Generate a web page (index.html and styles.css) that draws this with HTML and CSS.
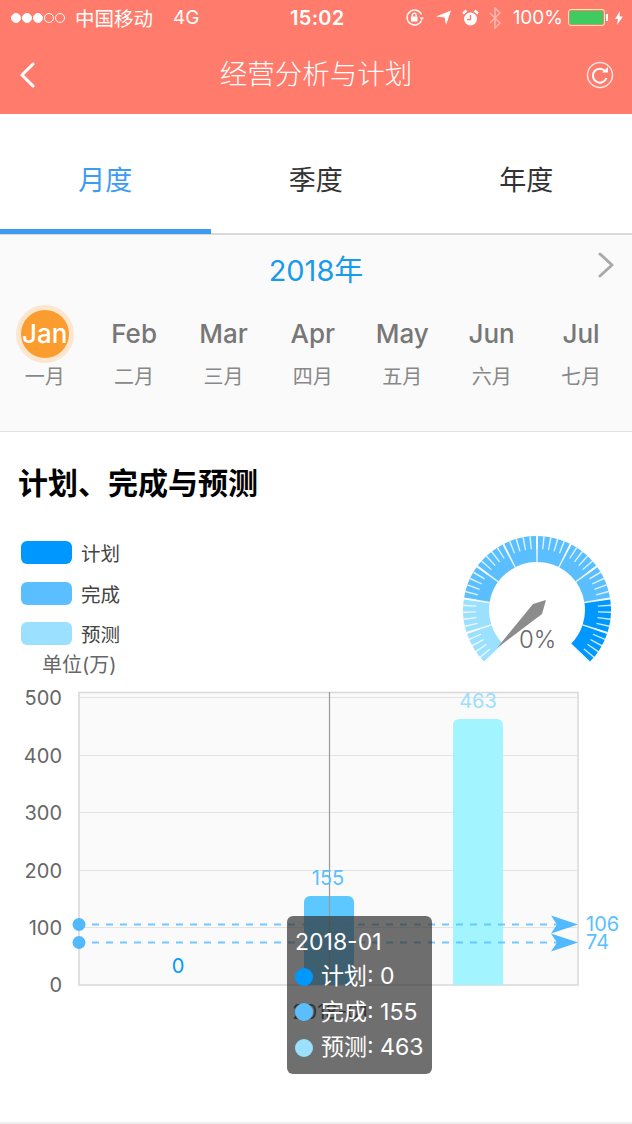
FILE: index.html
```html
<!DOCTYPE html>
<html lang="zh-CN">
<head>
	<meta charset="UTF-8">
	<meta name="viewport" content="width=device-width, initial-scale=1.0">
	<title>经营分析与计划</title>
	<link rel="stylesheet" href="styles.css">
</head>
<body>

	<header class="top">
		<div class="status">
			<div class="status-left">
				<span class="signal"><i></i><i></i><i></i><i class="off"></i><i class="off"></i></span>
				<span class="carrier">中国移动</span>
				<span class="net">4G</span>
			</div>
			<div class="clock">15:02</div>
			<div class="status-right">
				<svg class="ico-lock" width="18" height="18" viewBox="0 0 18 18" fill="none" stroke="#fff" stroke-width="1.400"><path d="M15.500 11.500A7.500 7.500 0 1 1 15.500 5.500"/><path d="M13.500 8.500h4.500l-2.200 2.800z" fill="#fff" stroke="none"/><rect x="5" y="7.500" width="6.500" height="5" fill="#fff" stroke="none"/><path d="M6.400 7.500V6a1.800 1.800 0 0 1 3.700 0v1.500"/></svg>
				<svg class="ico-arrow" width="15" height="15" viewBox="0 0 15 15"><path d="M15 0.500L10 15 8.600 7.400 0 6.500z" fill="#fff"/></svg>
				<svg width="17" height="18" viewBox="0 0 17 18"><circle cx="8.500" cy="10" r="6.500" fill="#fff"/><path d="M8.500 6v4.500H5" fill="none" stroke="#ff7b6b" stroke-width="1.300"/><path d="M1 4.500L4.500 1.500M16 4.500L12.500 1.500" stroke="#fff" stroke-width="2.400"/></svg>
				<svg class="bt" width="12" height="22" viewBox="0 0 12 22" fill="none" stroke="#fff" stroke-opacity=".45" stroke-width="1.500"><path d="M1 6l10 10-5 5V1l5 5L1 16"/></svg>
				<span class="battery-pct">100%</span>
				<span class="battery"><span class="battery-fill"></span></span>
				<svg width="8" height="14" viewBox="0 0 8 14"><path d="M5 0L0 8h3l-1 6 6-8.500H4.500z" fill="#fff"/></svg>
			</div>
		</div>
		<div class="navbar">
			<svg class="nav-icon" width="18" height="26" viewBox="0 0 18 26" fill="none" stroke="#fff" stroke-width="3" stroke-linecap="round" stroke-linejoin="round"><path d="M15 2L4 13l11 11"/></svg>
			<h1>经营分析与计划</h1>
			<svg class="nav-icon" width="28" height="28" viewBox="0 0 28 28" fill="none" stroke="#fff" stroke-width="1.500"><circle cx="14" cy="14" r="12.500" stroke-opacity=".8"/><path d="M19.500 10.500A7 7 0 1 0 20.500 17" stroke-width="2"/><path d="M16 11.500h6V6z" fill="#fff" stroke="none"/></svg>
		</div>
	</header>

	<nav class="tabs">
		<a class="tab active">月度</a>
		<a class="tab">季度</a>
		<a class="tab">年度</a>
	</nav>

	<section class="months">
		<div class="year-row">
			<span class="year">2018年</span>
			<svg class="year-next" width="18" height="28" viewBox="0 0 18 28" fill="none" stroke="#aaa" stroke-width="3" stroke-linecap="round" stroke-linejoin="round"><path d="M3 3l12 11L3 25"/></svg>
		</div>
		<ul class="month-list">
			<li class="current"><b>Jan</b><span>一月</span></li>
			<li><b>Feb</b><span>二月</span></li>
			<li><b>Mar</b><span>三月</span></li>
			<li><b>Apr</b><span>四月</span></li>
			<li><b>May</b><span>五月</span></li>
			<li><b>Jun</b><span>六月</span></li>
			<li><b>Jul</b><span>七月</span></li>
		</ul>
	</section>

	<section class="report">
		<h2>计划、完成与预测</h2>

		<div class="overview">
			<div>
				<ul class="legend">
					<li><i class="plan"></i>计划</li>
					<li><i class="done"></i>完成</li>
					<li><i class="forecast"></i>预测</li>
				</ul>
				<p class="unit">单位(万)</p>
			</div>

			<svg class="gauge" width="150" height="130" viewBox="462 536 150 130">
				<g fill="none" stroke-width="26">
					<circle cx="537" cy="611" r="61" pathLength="360" stroke="#9be0ff" stroke-dasharray="54 306" transform="rotate(135 537 611)"/>
					<circle cx="537" cy="611" r="61" pathLength="360" stroke="#5bbfff" stroke-dasharray="162 198" transform="rotate(189 537 611)"/>
					<circle cx="537" cy="611" r="61" pathLength="360" stroke="#0098ff" stroke-dasharray="54 306" transform="rotate(351 537 611)"/>
					<circle cx="537" cy="611" r="67.500" pathLength="360" stroke="#fff" stroke-opacity=".8" stroke-width="13" stroke-dasharray="1.200 4.200" stroke-dashoffset=".6" transform="rotate(135 537 611)"/>
					<circle cx="537" cy="611" r="61" pathLength="360" stroke="#fff" stroke-opacity=".85" stroke-dasharray="1.600 25.400" stroke-dashoffset=".8" transform="rotate(135 537 611)"/>
				</g>
				<path d="M546 601L533 605 497 649 542 615z" fill="#8c8c8c"/>
				<text x="519" y="649" class="gauge-value">0%</text>
			</svg>
		</div>

		<div class="chart">
			<svg width="632" height="420" viewBox="0 680 632 420">
				<rect x="79" y="692.500" width="499" height="292.500" fill="#fafafa" stroke="#d8d8d8" stroke-width="1.500"/>
				<path d="M79 697.500H578M79 755.500H578M79 812.500H578M79 870.500H578M79 927.500H578" stroke="#e3e3e3" stroke-width="1"/>
				<g class="axis-y">
					<text x="62" y="705">500</text>
					<text x="62" y="763">400</text>
					<text x="62" y="820">300</text>
					<text x="62" y="878">200</text>
					<text x="62" y="935">100</text>
					<text x="62" y="992">0</text>
				</g>
				<path d="M304 985V902a6 6 0 0 1 6-6h38a6 6 0 0 1 6 6v83z" fill="#5cc8ff"/>
				<path d="M453 985V725a6 6 0 0 1 6-6h38a6 6 0 0 1 6 6v260z" fill="#a2f4ff"/>
				<path d="M329.500 692V985" stroke="#999" stroke-width="1.200"/>
				<path d="M92 924.500H560M92 942.500H560" stroke="#5bbfff" stroke-opacity=".85" stroke-width="2" stroke-dasharray="7 7"/>
				<g fill="#52b9ff">
					<circle cx="79" cy="924.500" r="6.500"/>
					<circle cx="79" cy="942.500" r="6.500"/>
					<path d="M551 915.500L578 924.500 551 933.500 557 924.500z"/>
					<path d="M551 933.500L578 942.500 551 951.500 557 942.500z"/>
				</g>
				<text x="178" y="973" class="val plan-val">0</text>
				<text x="328" y="885" class="val done-val">155</text>
				<text x="478" y="708" class="val forecast-val">463</text>
				<text x="586" y="931" class="val-side">106</text>
				<text x="586" y="949" class="val-side">74</text>
				<text x="330" y="1019" class="axis-x">2018-01</text>
			</svg>

			<div class="tip">
				<div class="tip-title">2018-01</div>
				<div class="tip-row"><i class="plan"></i>计划: 0</div>
				<div class="tip-row"><i class="done"></i>完成: 155</div>
				<div class="tip-row"><i class="forecast"></i>预测: 463</div>
			</div>
		</div>
	</section>

</body>
</html>
```

FILE: styles.css
```css
* {
	margin: 0;
	padding: 0;
	box-sizing: border-box;
}

body {
	width: 632px;
	height: 1124px;
	overflow: hidden;
	background-color: #fff;
	font-family: Inter, "Noto Sans CJK SC", sans-serif;
	color: #333;
}

ul {
	list-style: none;
}

/*header*/
.top {
	height: 114px;
	background-color: #ff7b6b;
	color: #fff;
}

.status {
	display: flex;
	justify-content: space-between;
	align-items: center;
	height: 35px;
	padding: 0 9px 0 11px;
	position: relative;
}

.status-left,
.status-right {
	display: flex;
	align-items: center;
}

.signal {
	display: flex;
	gap: 1px;
	margin-right: 10px;
}

.signal i {
	width: 10px;
	height: 10px;
	border-radius: 50%;
	background-color: #fff;
	border: 1px solid #fff;
}

.signal i.off {
	background-color: transparent;
}

.carrier {
	font-size: 19.500px;
	margin-right: 20px;
}

.net {
	font-size: 19px;
}

.clock {
	position: absolute;
	left: 290px;
	font-size: 20px;
	font-weight: 600;
	letter-spacing: .3px;
}

.status-right {
	gap: 8px;
}

.ico-lock {
	margin-right: 4px;
}

.ico-arrow {
	margin-right: 3px;
}

.status-right .bt {
	margin: 0 4px 0 2px;
}

.battery-pct {
	font-size: 19px;
	margin-right: -3px;
}

.battery {
	display: block;
	position: relative;
	width: 37px;
	height: 17px;
	margin-right: 2px;
	padding: 1px;
	border: 1px solid #fde9b8;
	border-radius: 3px;
}

.battery::after {
	content: "";
	position: absolute;
	right: -4px;
	top: 4px;
	width: 2px;
	height: 7px;
	background-color: #fff;
}

.battery-fill {
	display: block;
	height: 100%;
	background-color: #3ecb60;
}

.navbar {
	display: flex;
	justify-content: space-between;
	align-items: center;
	height: 79px;
	padding: 0 18px;
}

.navbar h1 {
	margin-left: 10px;
	font-size: 27.500px;
	font-weight: 300;
	line-height: 79px;
}

/*tabs*/
.tabs {
	display: flex;
	height: 121px;
	border-bottom: 2px solid #d9d9d9;
}

.tab {
	width: 210.500px;
	height: 120px;
	line-height: 134px;
	text-align: center;
	font-size: 27px;
	color: #333;
}

.tab.active {
	color: #3d9bf0;
	border-bottom: 5px solid #3d9bf0;
}

/*months*/
.months {
	height: 197px;
	background-color: #fafafa;
	border-bottom: 1px solid #e3e3e3;
}

.year-row {
	display: flex;
	justify-content: center;
	align-items: center;
	height: 66px;
	position: relative;
}

.year {
	font-size: 29px;
	color: #1a9bea;
}

.year-next {
	position: absolute;
	right: 17px;
	top: 16px;
}

.month-list {
	display: grid;
	grid-template-columns: repeat(7, 89.400px);
	margin-top: 5px;
	text-align: center;
}

.month-list b {
	display: block;
	height: 56px;
	line-height: 56px;
	font-size: 26px;
	font-weight: 500;
	color: #777;
}

.month-list span {
	display: block;
	font-size: 20px;
	line-height: 30px;
	color: #888;
}

.month-list .current b {
	width: 48px;
	height: 48px;
	line-height: 48px;
	margin: 4px auto;
	border-radius: 50%;
	background-color: #fb9c2f;
	box-shadow: 0 0 0 5px #fbe6cf;
	color: #fff;
}

/*report*/
.report {
	height: 692px;
	padding-top: 30px;
	border-bottom: 2px solid #eee;
}

.report h2 {
	padding-left: 18px;
	font-size: 30px;
	line-height: 42px;
	font-weight: 700;
	color: #000;
}

.overview {
	display: flex;
	justify-content: space-between;
	align-items: flex-start;
	height: 176px;
	padding: 37px 20px 0 21px;
}

.legend li {
	display: flex;
	align-items: center;
	gap: 9px;
	height: 23px;
	margin-bottom: 17.500px;
	font-size: 19.500px;
	color: #444;
}

.legend i {
	width: 51px;
	height: 23px;
	border-radius: 6px;
}

.plan {
	background-color: #0098ff;
}

.done {
	background-color: #5bbfff;
}

.forecast {
	background-color: #9be0ff;
}

.unit {
	margin: -12px 0 0 21px;
	font-size: 20px;
	line-height: 28px;
	color: #666;
}

.gauge {
	margin-top: -6px;
}

.gauge-value {
	font-size: 24px;
	font-weight: 300;
	fill: #666;
}

/*chart*/
.chart {
	position: relative;
	height: 420px;
}

.chart svg {
	display: block;
}

.axis-y text {
	font-size: 20px;
	fill: #666;
	text-anchor: end;
}

.val {
	font-size: 20px;
	text-anchor: middle;
}

.plan-val {
	fill: #0098ff;
}

.done-val {
	fill: #5bbfff;
}

.forecast-val {
	fill: #9be0ff;
}

.val-side {
	font-size: 20px;
	fill: #5bbfff;
}

.axis-x {
	font-size: 20px;
	fill: #333;
	text-anchor: middle;
}

/*tooltip diatas chart*/
.tip {
	position: absolute;
	left: 287px;
	top: 236px;
	width: 145px;
	height: 158px;
	padding: 9px 8px;
	border-radius: 6px;
	background-color: rgba(50, 50, 50, .7);
	color: #fff;
	font-size: 23px;
}

.tip-title {
	line-height: 34px;
}

.tip-row {
	display: flex;
	align-items: center;
	gap: 8px;
	line-height: 35.500px;
	white-space: nowrap;
}

.tip-row i {
	flex: none;
	width: 18px;
	height: 18px;
	border-radius: 50%;
}
```
